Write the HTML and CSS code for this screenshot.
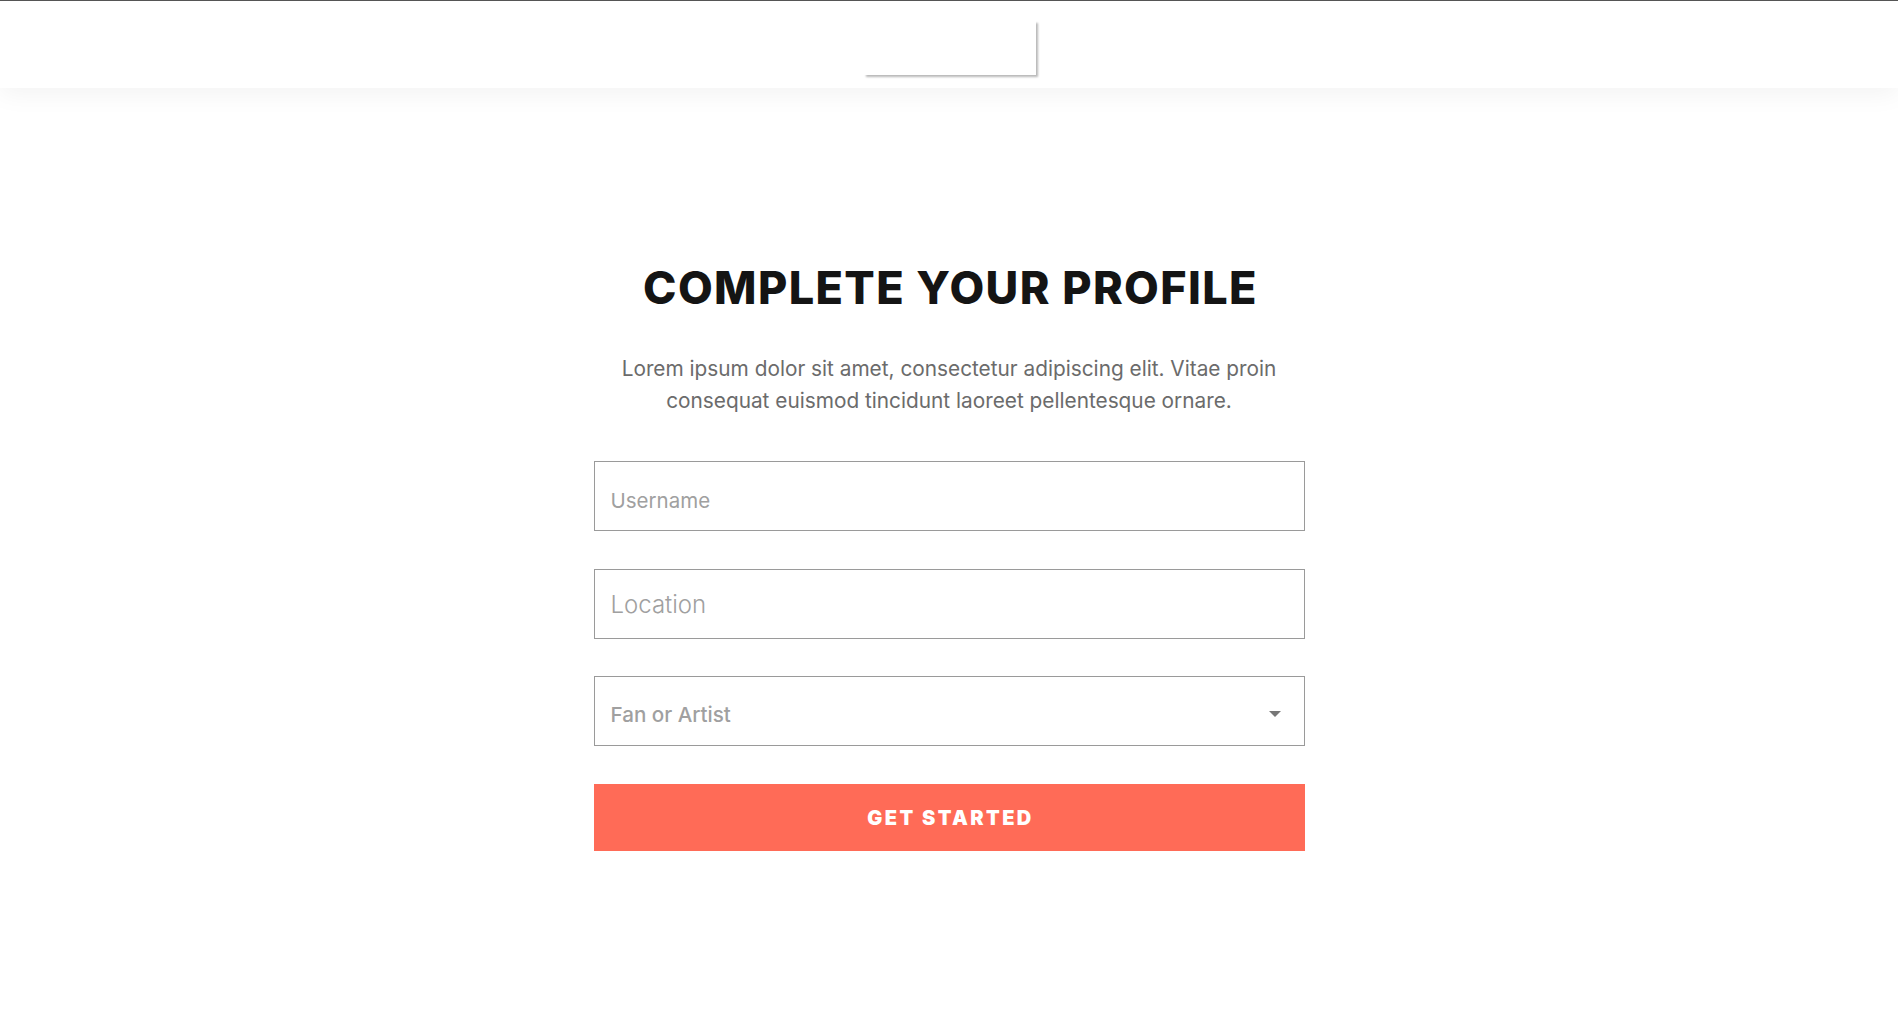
FILE: index.html
```html
<!DOCTYPE html>
<html lang="en">
<head>
<meta charset="utf-8">
<title>Complete your profile</title>
<link rel="stylesheet" href="styles.css">
</head>
<body>
<header class="site-header">
  <div class="logo-box"></div>
</header>
<main class="main">
  <section class="profile">
    <h1 class="profile-title">COMPLETE YOUR PROFILE</h1>
    <p class="profile-text">Lorem ipsum dolor sit amet, consectetur adipiscing elit. Vitae proin consequat euismod tincidunt laoreet pellentesque ornare.</p>
    <form class="profile-form">
      <input class="field field-username" type="text" placeholder="Username">
      <input class="field field-location" type="text" placeholder="Location">
      <div class="field field-select">
        <span class="select-label">Fan or Artist</span>
        <svg class="select-arrow" width="12" height="6" viewBox="0 0 12 6"><path d="M0 0H12L6 6Z" fill="#777"/></svg>
      </div>
      <button class="submit" type="button">GET STARTED</button>
    </form>
  </section>
</main>
</body>
</html>
```
FILE: styles.css
```css
html, body {
  margin: 0;
  padding: 0;
  background: #fff;
}
body {
  font-family: Inter, "Noto Sans", sans-serif;
}
.site-header {
  position: relative;
  z-index: 1;
  height: 88px;
  border-top: 1px solid #555;
  background: #fff;
  box-shadow: 0 6px 24px rgba(0, 0, 0, 0.05);
  display: flex;
  justify-content: center;
  align-items: flex-start;
  box-sizing: border-box;
}
.logo-box {
  width: 172px;
  height: 54px;
  margin-top: 20px;
  margin-left: 1px;
  background: #fff;
  box-shadow: 2px 2px 2px rgba(0, 0, 0, 0.28);
}
.main {
  display: flex;
  justify-content: center;
  padding-top: 173px;
}
.profile {
  width: 711px;
  display: flex;
  flex-direction: column;
  align-items: center;
}
.profile-title {
  margin: 0;
  padding-left: 3px;
  font-family: Inter, sans-serif;
  font-weight: 800;
  font-size: 45px;
  line-height: 54px;
  color: #141414;
  letter-spacing: 1.4px;
  white-space: nowrap;
}
.profile-text {
  margin: 38px 0 0;
  width: 700px;
  text-align: center;
  font-size: 20.8px;
  line-height: 32px;
  color: #6b6b6b;
}
.profile-form {
  width: 711px;
  margin-top: 44px;
  display: flex;
  flex-direction: column;
  gap: 38px;
}
.field {
  box-sizing: border-box;
  width: 100%;
  height: 70px;
  margin: 0;
  border: 1px solid #9a9a9a;
  border-radius: 0;
  background: #fff;
  padding: 6px 16px 0;
  font-family: Inter, sans-serif;
  color: #333;
  outline: none;
}
.field::placeholder {
  color: #a0a0a0;
  opacity: 1;
}
.field-username {
  font-size: 20.5px;
  padding-top: 9px;
}
.field-location {
  font-size: 24px;
  font-weight: 300;
  padding-top: 1px;
}
.field-select {
  display: flex;
  align-items: center;
  justify-content: space-between;
  margin-top: -1px;
  padding: 7px 23px 0 16px;
}
.select-label {
  font-size: 20.6px;
  font-weight: 500;
  color: #a0a0a0;
}
.select-arrow {
  display: block;
  margin-top: -2px;
}
.submit {
  height: 67px;
  border: 0;
  border-radius: 0;
  background: #ff6b57;
  color: #fff;
  font-family: Inter, sans-serif;
  font-weight: 900;
  font-size: 20px;
  letter-spacing: 2.4px;
  padding-left: 9px;
  cursor: pointer;
}
```
